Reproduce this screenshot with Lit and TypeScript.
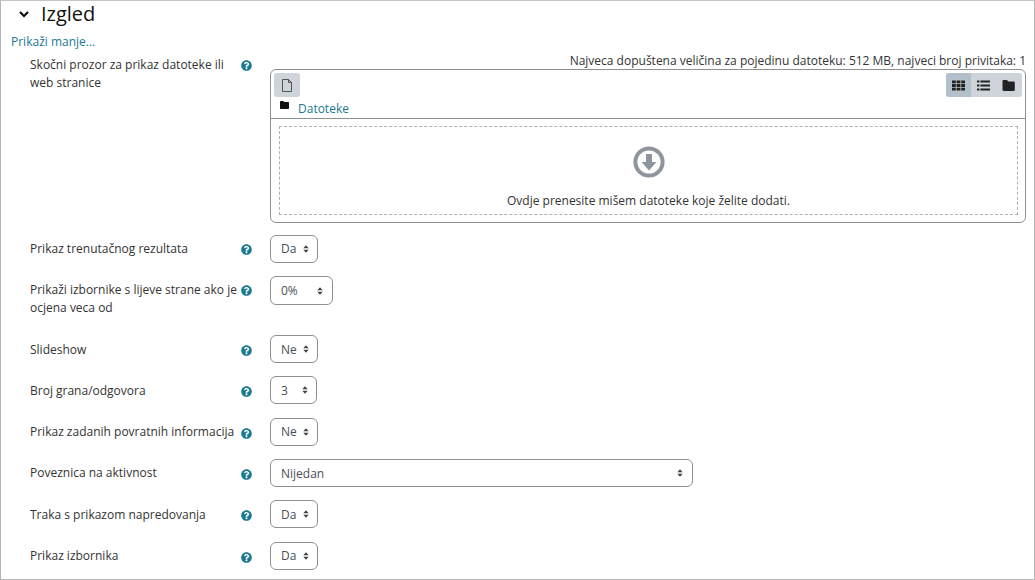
import { LitElement, html, css, svg } from "lit";
import { customElement } from "lit/decorators.js";

const help = html`<svg class="help" viewBox="0 0 512 512"><path fill="#1b7a90" d="M504 256c0 137-111 248-248 248S8 393 8 256 119 8 256 8s248 111 248 248zM263 90c-54 0-89 23-116 63-4 5-3 12 3 16l35 26c5 4 13 3 17-2 18-23 30-36 58-36 21 0 46 13 46 33 0 15-12 23-33 34-23 13-54 30-54 71v8c0 7 5 12 12 12h56c7 0 12-5 12-12v-4c0-29 83-30 83-106 0-58-60-103-119-103zm-7 246c-25 0-45 20-45 45s20 45 45 45 45-20 45-45-20-45-45-45z"/></svg>`;

const arrows = svg`<svg class="arrows" viewBox="0 0 8 10"><path fill="#444" d="M4 0 7.6 4H.4zM4 10 .4 6h7.2z"/></svg>`;

interface Row { label: string; value: string; width: number; cls?: string; }
const rows: Row[] = [
  { label: "Prikaz trenutačnog rezultata", value: "Da", width: 48, cls: "early" },
  { label: "Prikaži izbornike s lijeve strane ako je ocjena veca od", value: "0%", width: 63, cls: "tall early" },
  { label: "Slideshow", value: "Ne", width: 48 },
  { label: "Broj grana/odgovora", value: "3", width: 47 },
  { label: "Prikaz zadanih povratnih informacija", value: "Ne", width: 48 },
  { label: "Poveznica na aktivnost", value: "Nijedan", width: 423, cls: "wide" },
  { label: "Traka s prikazom napredovanja", value: "Da", width: 48 },
  { label: "Prikaz izbornika", value: "Da", width: 48 },
];

@customElement("app-root")
export class AppRoot extends LitElement {
  static styles = css`
    :host { display: block; width: 1035px; height: 580px; overflow: hidden; background: #fff; font-family: "Open Sans", sans-serif; font-size: 12px; color: #333; }
    * { box-sizing: border-box; }
    .frame { height: 580px; border: 1px solid #b5b5b5; border-top-color: #c4c4c4; padding: 0 0 0 10px; }
    .head { display: flex; align-items: center; height: 26px; padding-left: 7px; gap: 11px; color: #111; font-size: 20px; line-height: 26px; }
    .chev { width: 12px; height: 12px; flex: none; }
    .more { display: block; height: 18px; margin-top: 6px; line-height: 18px; color: #1b7a90; text-decoration: none; }
    .row { display: flex; margin-left: 19px; }
    .label { width: 210px; flex: none; line-height: 18px; padding-top: 5px; }
    .iconcell { width: 30px; flex: none; padding: 9px 0 0 1px; }
    .help { display: block; width: 11px; height: 11px; }
    .file { flex: none; width: 756px; }
    .limit { height: 18px; margin-top: 1px; line-height: 18px; text-align: right; white-space: nowrap; }
    .first { height: 183.7px; }
    .fp { height: 154px; width: 756px; margin-top: -1px; border: 1px solid #8f8f8f; border-radius: 6px; }
    .toolbar { display: flex; justify-content: space-between; padding: 3px 3px 0 3px; height: 27px; }
    .btn { width: 26px; height: 24px; background: #ced4da; border-radius: 3px; display: flex; align-items: center; justify-content: center; }
    .btn svg { width: 12px; height: 15px; }
    .views { display: flex; width: 76px; height: 24px; border-radius: 3px; background: #ced4da; overflow: hidden; }
    .views div { width: 25px; display: flex; align-items: center; justify-content: center; }
    .views .on { background: #b3bfc9; }
    .views svg { width: 13px; height: 13px; }
    .path { display: flex; height: 21px; align-items: center; padding-left: 9px; gap: 9px; color: #1b7a90; border-bottom: 1px solid #8f8f8f; box-sizing: content-box; }
    .path svg { width: 9px; height: 8px; margin-top: -6px; }
    .path span { line-height: 18px; margin-top: 2px; }
    .drop { margin: 7px 7px 0 8px; height: 89px; border: 1px dashed #b0b0b0; text-align: center; display: flex; flex-direction: column; align-items: center; }
    .drop svg { width: 32px; height: 32px; margin-top: 19px; }
    .drop span { line-height: 18px; margin-top: 14px; }
    .item { height: 41.35px; }
    .item.tall { height: 59px; }
    .item .label { padding-top: 5.5px; }
    .item.early .label, .item.wide .label { padding-top: 5px; }
    .item .iconcell { padding-top: 10px; }
    .item.early .iconcell { padding-top: 9px; }
    .select { height: 28px; border: 1px solid #8f8f8f; border-radius: 6px; display: flex; align-items: center; justify-content: space-between; padding: 0 8px 0 10px; color: #495057; }
    .tall .select { height: 29px; padding-right: 9px; }
    .wide .select { padding-right: 9px; }
    .arrows { width: 6px; height: 8px; flex: none; }
  `;

  render() {
    return html`<div class="frame">
      <div class="head">
        <svg class="chev" viewBox="0 0 12 12"><path d="M2 4l4 4 4-4" fill="none" stroke="#111" stroke-width="2.2"/></svg>
        <span>Izgled</span>
      </div>
      <a class="more">Prikaži manje...</a>
      <div class="row first">
        <div class="label">Skočni prozor za prikaz datoteke ili web stranice</div>
        <div class="iconcell">${help}</div>
        <div class="file">
          <div class="limit">Najveca dopuštena veličina za pojedinu datoteku: 512 MB, najveci broj privitaka: 1</div>
          <div class="fp">
            <div class="toolbar">
              <div class="btn"><svg viewBox="0 0 12 15"><path d="M1.500 1.500h6l3 3v9h-9zM7.500 1.500v3h3" fill="none" stroke="#444" stroke-width=".9"/></svg></div>
              <div class="views">
                <div class="on"><svg viewBox="0 0 13 13"><path fill="#222" d="M0 1.500h3.800v2.800H0zM4.600 1.500h3.800v2.800H4.600zM9.200 1.500H13v2.800H9.200zM0 5.100h3.800v2.800H0zM4.600 5.100h3.800v2.800H4.600zM9.200 5.100H13v2.800H9.200zM0 8.700h3.800v2.800H0zM4.600 8.700h3.800v2.800H4.600zM9.200 8.700H13v2.800H9.200z"/></svg></div>
                <div><svg viewBox="0 0 13 13"><path fill="#222" d="M0 1.600h2.400v2H0zM3.400 1.600H13v2H3.400zM0 5.500h2.400v2H0zM3.400 5.500H13v2H3.400zM0 9.400h2.400v2H0zM3.400 9.400H13v2H3.400z"/></svg></div>
                <div><svg viewBox="0 0 13 13"><path fill="#222" d="M.5 2.200C.5 1.500 1 1 1.700 1h3.200l1.500 1.600h5.200c.7 0 1.200.5 1.200 1.200v6.900c0 .7-.5 1.200-1.200 1.200H1.700c-.7 0-1.200-.5-1.200-1.200z"/></svg></div>
              </div>
            </div>
            <div class="path">
              <svg viewBox="0 0 9 8"><path fill="#111" d="M0 1c0-.6.4-1 1-1h2.200l1 1H8c.6 0 1 .4 1 1v5c0 .6-.4 1-1 1H1c-.6 0-1-.4-1-1z"/></svg>
              <span>Datoteke</span>
            </div>
            <div class="drop">
              <svg viewBox="0 0 32 32"><circle cx="16" cy="16" r="13.600" fill="none" stroke="#8f959e" stroke-width="4"/><path fill="#8f959e" d="M13 8h6v8h4.500L16 24.500 8.500 16H13z"/></svg>
              <span>Ovdje prenesite mišem datoteke koje želite dodati.</span>
            </div>
          </div>
        </div>
      </div>
      ${rows.map(
        (r) => html`<div class="row item ${r.cls ?? ""}">
          <div class="label">${r.label}</div>
          <div class="iconcell">${help}</div>
          <div class="select" style="width:${r.width}px"><span>${r.value}</span>${arrows}</div>
        </div>`
      )}
    </div>`;
  }
}
